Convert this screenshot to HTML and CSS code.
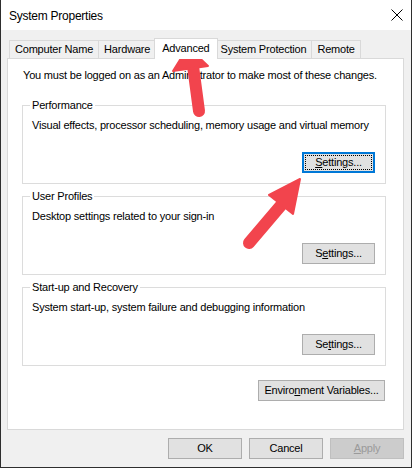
FILE: index.html
```html
<!DOCTYPE html>
<html lang="en">
<head>
<meta charset="utf-8">
<title>System Properties</title>
<link rel="stylesheet" href="styles.css">
</head>
<body>
<div class="window">
  <div class="titlebar">
    <span class="title">System Properties</span>
    <svg class="close" width="12" height="12" viewBox="0 0 12 12" aria-label="Close">
      <path d="M0.5 0.5 L11.5 11.5 M11.5 0.5 L0.5 11.5" stroke="#000" stroke-width="1" fill="none"/>
    </svg>
  </div>
  <div class="content">
    <div class="tabs">
      <div class="tab">Computer Name</div>
      <div class="tab">Hardware</div>
      <div class="tab selected">Advanced</div>
      <div class="tab">System Protection</div>
      <div class="tab">Remote</div>
    </div>
    <div class="panel">
      <p class="note">You must be logged on as an Administrator to make most of these changes.</p>
      <fieldset class="group first">
        <legend>Performance</legend>
        <p class="desc">Visual effects, processor scheduling, memory usage and virtual memory</p>
        <div class="actions"><button class="btn settings focused"><u>S</u>ettings...</button></div>
      </fieldset>
      <fieldset class="group">
        <legend>User Profiles</legend>
        <p class="desc">Desktop settings related to your sign-in</p>
        <div class="actions"><button class="btn settings">S<u>e</u>ttings...</button></div>
      </fieldset>
      <fieldset class="group">
        <legend>Start-up and Recovery</legend>
        <p class="desc">System start-up, system failure and debugging information</p>
        <div class="actions"><button class="btn settings">Se<u>t</u>tings...</button></div>
      </fieldset>
      <div class="env-row"><button class="btn env">Enviro<u>n</u>ment Variables...</button></div>
    </div>
    <div class="footer">
      <button class="btn dlg">OK</button>
      <button class="btn dlg">Cancel</button>
      <button class="btn dlg disabled"><u>A</u>pply</button>
    </div>
  </div>
  <svg class="arrows" width="412" height="468" viewBox="0 0 412 468" aria-hidden="true">
    <g fill="#f2444d" stroke="#f2444d" stroke-linejoin="round">
      <line x1="199" y1="111" x2="193" y2="66" stroke-width="12" stroke-linecap="round"/>
      <polygon points="188,47 173,71 208,66" stroke-width="2"/>
      <line x1="249" y1="243" x2="283" y2="203" stroke-width="12" stroke-linecap="round"/>
      <polygon points="300,179 269,195 293,214" stroke-width="2"/>
    </g>
  </svg>
</div>
</body>
</html>
```
FILE: styles.css
```css
html, body {
  margin: 0;
  padding: 0;
  background: #f0f0f0;
}

.window {
  position: relative;
  width: 412px;
  height: 468px;
  box-sizing: border-box;
  border: 1px solid #2e2e2e;
  border-top: none;
  background: #f0f0f0;
  display: flex;
  flex-direction: column;
  font-family: "Liberation Sans", Arial, sans-serif;
  font-size: 11px;
  color: #000;
  letter-spacing: -0.2px;
}

.titlebar {
  height: 30px;
  flex: none;
  box-sizing: border-box;
  background: #fff;
  display: flex;
  align-items: center;
  justify-content: space-between;
  padding: 2px 8px 0 8px;
}

.title {
  font-size: 12px;
  letter-spacing: -0.25px;
}

.close {
  display: block;
  margin-top: -2px;
}

.content {
  flex: 1;
  display: flex;
  flex-direction: column;
  padding: 8px 7px 0 6px;
}

.tabs {
  display: flex;
  align-items: flex-end;
  height: 20px;
  padding-left: 2px;
}

.tab {
  height: 18px;
  box-sizing: border-box;
  border: 1px solid #d9d9d9;
  border-bottom: none;
  background: #f0f0f0;
  padding: 0 5px 1px;
  display: flex;
  align-items: center;
  white-space: nowrap;
}

.tab + .tab {
  margin-left: -1px;
}

.tab.selected {
  position: relative;
  z-index: 1;
  height: 21px;
  margin-bottom: -1px;
  margin-left: -2px;
  margin-right: -2px;
  padding: 0 7px 3px;
  background: #fff;
}

.panel {
  background: #fff;
  border: 1px solid #d9d9d9;
  padding: 9px 17px 28px 14px;
  display: flex;
  flex-direction: column;
}

.note {
  margin: 0;
  padding-left: 1px;
  line-height: 15px;
  white-space: nowrap;
}

.group {
  margin: 5px 0 0;
  padding: 0 10px 10px 9px;
  border: 1px solid #dcdcdc;
  min-width: 0;
}

.group.first {
  margin-top: 15px;
}

.group legend {
  padding: 0 2px;
  margin-left: -2px;
  line-height: 14px;
}

.desc {
  margin: 6px 0 0;
  line-height: 15px;
  white-space: nowrap;
}

.actions {
  display: flex;
  justify-content: flex-end;
  margin-top: 19px;
}

.btn {
  height: 21px;
  box-sizing: border-box;
  border: 1px solid #adadad;
  background: #e1e1e1;
  font-family: inherit;
  font-size: 11px;
  letter-spacing: -0.2px;
  color: #000;
  padding: 0;
  margin: 0;
  line-height: 1;
}

.btn u {
  text-underline-offset: 1px;
}

.settings {
  width: 73px;
}

.btn.focused {
  border: 2px solid #0078d7;
  outline: 1px dotted #000;
  outline-offset: -4px;
}

.env-row {
  display: flex;
  justify-content: flex-end;
  margin-top: 14px;
  padding-right: 1px;
}

.env {
  width: 127px;
}

.footer {
  display: flex;
  justify-content: flex-end;
  gap: 7px;
  padding-top: 8px;
}

.dlg {
  width: 74px;
}

.btn.disabled {
  background: #cccccc;
  border-color: #bfbfbf;
  color: #9a9a9a;
}

.arrows {
  position: absolute;
  left: -1px;
  top: 0;
  pointer-events: none;
}
```
